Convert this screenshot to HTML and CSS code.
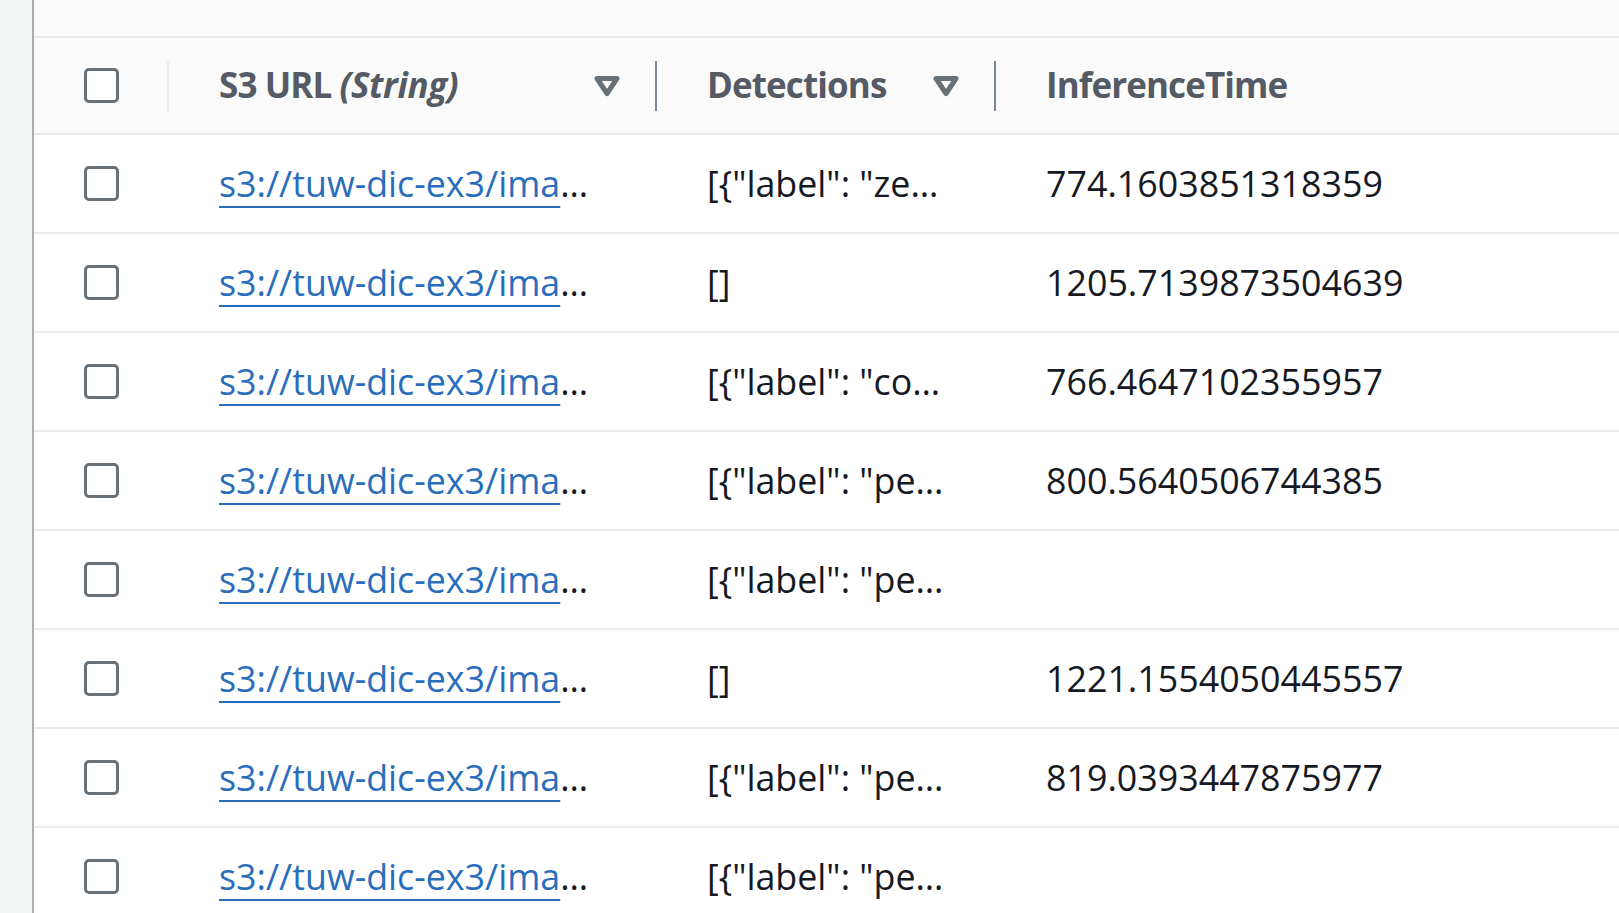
FILE: index.html
```html
<!DOCTYPE html>
<html lang="en">
<head>
<meta charset="utf-8">
<title>Table</title>
<link rel="stylesheet" href="styles.css">
</head>
<body>
<div class="rail"></div>
<main class="main">
  <div class="topband"></div>
  <div class="table">
    <div class="row head">
      <div class="cell sel"><span class="checkbox"></span></div>
      <div class="cell hcell sep-light">
        <span class="hlabel">S3 URL <em>(String)</em></span>
        <svg class="caret" viewBox="0 0 16 16" width="40" height="40" aria-hidden="true"><path d="M4 5h8l-4 6-4-6z"/></svg>
      </div>
      <div class="cell hcell sep-dark">
        <span class="hlabel">Detections</span>
        <svg class="caret" viewBox="0 0 16 16" width="40" height="40" aria-hidden="true"><path d="M4 5h8l-4 6-4-6z"/></svg>
      </div>
      <div class="cell hcell sep-dark">
        <span class="hlabel">InferenceTime</span>
      </div>
    </div>

    <div class="row">
      <div class="cell sel"><span class="checkbox"></span></div>
      <div class="cell trunc"><a href="#">s3://tuw-dic-ex3/images/000000000139.jpg</a></div>
      <div class="cell trunc det">[{"label": "zebra", "confidence": 0.97}]</div>
      <div class="cell">774.1603851318359</div>
    </div>
    <div class="row">
      <div class="cell sel"><span class="checkbox"></span></div>
      <div class="cell trunc"><a href="#">s3://tuw-dic-ex3/images/000000000285.jpg</a></div>
      <div class="cell trunc det">[]</div>
      <div class="cell">1205.7139873504639</div>
    </div>
    <div class="row">
      <div class="cell sel"><span class="checkbox"></span></div>
      <div class="cell trunc"><a href="#">s3://tuw-dic-ex3/images/000000000632.jpg</a></div>
      <div class="cell trunc det">[{"label": "couch", "confidence": 0.91}]</div>
      <div class="cell">766.4647102355957</div>
    </div>
    <div class="row">
      <div class="cell sel"><span class="checkbox"></span></div>
      <div class="cell trunc"><a href="#">s3://tuw-dic-ex3/images/000000000724.jpg</a></div>
      <div class="cell trunc det">[{"label": "person", "confidence": 0.88}]</div>
      <div class="cell">800.5640506744385</div>
    </div>
    <div class="row">
      <div class="cell sel"><span class="checkbox"></span></div>
      <div class="cell trunc"><a href="#">s3://tuw-dic-ex3/images/000000000776.jpg</a></div>
      <div class="cell trunc det">[{"label": "person", "confidence": 0.93}]</div>
      <div class="cell"></div>
    </div>
    <div class="row">
      <div class="cell sel"><span class="checkbox"></span></div>
      <div class="cell trunc"><a href="#">s3://tuw-dic-ex3/images/000000000785.jpg</a></div>
      <div class="cell trunc det">[]</div>
      <div class="cell">1221.1554050445557</div>
    </div>
    <div class="row">
      <div class="cell sel"><span class="checkbox"></span></div>
      <div class="cell trunc"><a href="#">s3://tuw-dic-ex3/images/000000000802.jpg</a></div>
      <div class="cell trunc det">[{"label": "person", "confidence": 0.86}]</div>
      <div class="cell">819.0393447875977</div>
    </div>
    <div class="row">
      <div class="cell sel"><span class="checkbox"></span></div>
      <div class="cell trunc"><a href="#">s3://tuw-dic-ex3/images/000000000872.jpg</a></div>
      <div class="cell trunc det">[{"label": "person", "confidence": 0.95}]</div>
      <div class="cell"></div>
    </div>
  </div>
</main>
</body>
</html>
```

FILE: styles.css
```css
html, body {
  margin: 0;
  padding: 0;
  height: 100%;
}

body {
  display: flex;
  overflow: hidden;
  background: #ffffff;
  font-family: "Open Sans", "Noto Sans", sans-serif;
  font-size: 35.8px;
  line-height: 50px;
  color: #16191f;
}

.rail {
  flex: 0 0 32px;
  background: #f2f3f3;
  border-right: 2px solid #a6adb3;
}

.main {
  flex: 1 1 auto;
  display: flex;
  flex-direction: column;
  min-width: 0;
}

.topband {
  flex: 0 0 36px;
  background: #fafafa;
  border-bottom: 2px solid #e9ebed;
}

.table {
  display: flex;
  flex-direction: column;
}

.row {
  display: grid;
  grid-template-columns: 133px 488px 339px 1fr;
  height: 97px;
  align-items: center;
  border-bottom: 2px solid #e9ebed;
  flex: 0 0 auto;
}

.row > .cell {
  position: relative;
  top: -1px;
}

.row.head {
  height: 95px;
  background: #fafafa;
}

.cell {
  padding: 0 0 0 52px;
  white-space: nowrap;
  min-width: 0;
}

.cell.sel {
  padding-left: 50px;
  display: flex;
  align-items: center;
  top: 0;
}

.checkbox {
  display: block;
  width: 35px;
  height: 35px;
  box-sizing: border-box;
  border: 3px solid #687078;
  border-radius: 5px;
  background: #ffffff;
}

.cell.trunc {
  overflow: hidden;
  text-overflow: ellipsis;
  padding-right: 56px;
}

.cell.trunc.det {
  padding-right: 44px;
}

.cell.trunc a {
  color: #2a6ebb;
  text-decoration: underline;
  text-decoration-thickness: 2.5px;
  text-underline-offset: 9px;
}

.hcell {
  display: flex;
  align-items: center;
  padding-left: 0;
  padding-right: 28px;
}

.row > .hcell {
  top: 0;
}

.hcell::before {
  content: "";
  flex: 0 0 2px;
  height: 50px;
  margin-right: 50px;
}

.sep-light::before {
  background: #e9ebed;
}

.sep-dark::before {
  background: #7d8998;
}

.hlabel {
  flex: 1 1 auto;
  font-size: 35px;
  font-weight: 700;
  letter-spacing: -0.9px;
  color: #545b64;
  position: relative;
  top: -1px;
}

.hlabel em {
  font-style: italic;
  letter-spacing: -0.4px;
}

.caret {
  flex: 0 0 40px;
  display: block;
}

.caret path {
  fill: #ffffff;
  stroke: #687078;
  stroke-width: 2;
  stroke-linejoin: round;
}
```
